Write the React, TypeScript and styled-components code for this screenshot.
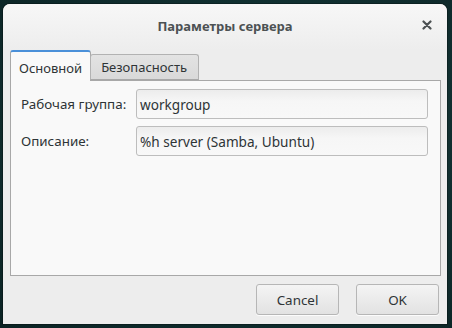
import React from "react";
import styled, { createGlobalStyle } from "styled-components";

const Global = createGlobalStyle`
  html, body { margin: 0; padding: 0; }
  body {
    background: #0f2c2d;
    width: 452px;
    height: 328px;
    overflow: hidden;
    font-family: "Noto Sans", "DejaVu Sans", sans-serif;
  }
`;

const Screen = styled.div`
  width: 452px;
  height: 328px;
  padding: 4px 5px 4px 3px;
  box-sizing: border-box;
  background: radial-gradient(ellipse at 60% 40%, #163a3b 0%, #0f2c2d 60%, #0b2324 100%);
`;

const Window = styled.div`
  width: 444px;
  height: 320px;
  background: #ededed;
  border-radius: 7px 7px 0 0;
  display: flex;
  flex-direction: column;
  overflow: hidden;
  box-shadow: 0 0 0 1px rgba(0,0,0,0.25);
`;

const TitleBar = styled.div`
  height: 46px;
  flex: none;
  position: relative;
  display: flex;
  align-items: center;
  justify-content: center;
  background: linear-gradient(#f7f7f7, #ededed);
`;

const Title = styled.div`
  font-size: 13px;
  font-weight: bold;
  color: #4c5153;
  margin-top: -2px;
`;

const Close = styled.div`
  position: absolute;
  right: 12px;
  top: 13px;
  width: 16px;
  height: 16px;
  display: flex;
  align-items: center;
  justify-content: center;
`;

const Body = styled.div`
  padding: 0 6px 0 7px;
  display: flex;
  flex-direction: column;
`;

const Tabs = styled.div`
  display: flex;
  align-items: flex-end;
  height: 30px;
  position: relative;
  z-index: 1;
`;

const Tab = styled.div<{ $active?: boolean }>`
  box-sizing: border-box;
  height: ${(p) => (p.$active ? 31 : 26)}px;
  padding: ${(p) => (p.$active ? "3px 8px 0 8px" : "0 11px 0 10px")};
  display: flex;
  align-items: center;
  font-size: 13px;
  color: #2e3436;
  border: 1px solid ${(p) => (p.$active ? "#a8a8a8" : "#b2b2b2")};
  border-bottom: ${(p) => (p.$active ? "none" : "1px solid #a8a8a8")};
  border-top: ${(p) => (p.$active ? "2px solid #4a90d9" : "1px solid #b2b2b2")};
  border-radius: 3px 3px 0 0;
  background: ${(p) => (p.$active ? "#f9f9f9" : "linear-gradient(#e3e3e3, #d9d9d9)")};
  margin-bottom: ${(p) => (p.$active ? -1 : 0)}px;
  ${(p) => (p.$active ? "" : "margin-left: -1px;")}
`;

const Page = styled.div`
  height: 196px;
  box-sizing: border-box;
  border: 1px solid #a8a8a8;
  background: #f9f9f9;
  padding: 8px 12px 0 10px;
  display: grid;
  grid-template-columns: 115px 1fr;
  grid-auto-rows: 30px;
  row-gap: 7px;
  align-content: start;
  align-items: center;
`;

const Label = styled.div`
  font-size: 13.4px;
  color: #2e3436;
`;

const Entry = styled.div`
  height: 30px;
  box-sizing: border-box;
  border: 1px solid #bdbdbd;
  border-radius: 3px;
  background: linear-gradient(#ececec, #f6f6f6 40%, #f8f8f8);
  padding: 0 7px 0 3px;
  display: flex;
  align-items: center;
  font-size: 13.6px;
  color: #2e3436;
`;

const Actions = styled.div`
  display: flex;
  justify-content: flex-end;
  gap: 17px;
  padding: 8px 8px 0 0;
`;

const Button = styled.div`
  width: 83px;
  height: 31px;
  box-sizing: border-box;
  border: 1px solid #b6b6b6;
  border-radius: 3px;
  background: linear-gradient(#f4f4f4, #e2e2e2);
  box-shadow: 0 1px 0 rgba(255,255,255,0.8);
  display: flex;
  align-items: center;
  justify-content: center;
  font-size: 13.4px;
  color: #2e3436;
`;

export default function App() {
  return (
    <>
      <Global />
      <Screen>
        <Window>
          <TitleBar>
            <Title>Параметры сервера</Title>
            <Close>
              <svg width="10" height="10" viewBox="0 0 10 10">
                <path d="M1.5 1.5 L8.5 8.5 M8.5 1.5 L1.5 8.5" stroke="#4c5153" strokeWidth="2.2" strokeLinecap="round" />
              </svg>
            </Close>
          </TitleBar>
          <Body>
            <Tabs>
              <Tab $active>Основной</Tab>
              <Tab>Безопасность</Tab>
            </Tabs>
            <Page>
              <Label>Рабочая группа:</Label>
              <Entry>workgroup</Entry>
              <Label>Описание:</Label>
              <Entry>%h server (Samba, Ubuntu)</Entry>
            </Page>
          </Body>
          <Actions>
            <Button>Cancel</Button>
            <Button>OK</Button>
          </Actions>
        </Window>
      </Screen>
    </>
  );
}
